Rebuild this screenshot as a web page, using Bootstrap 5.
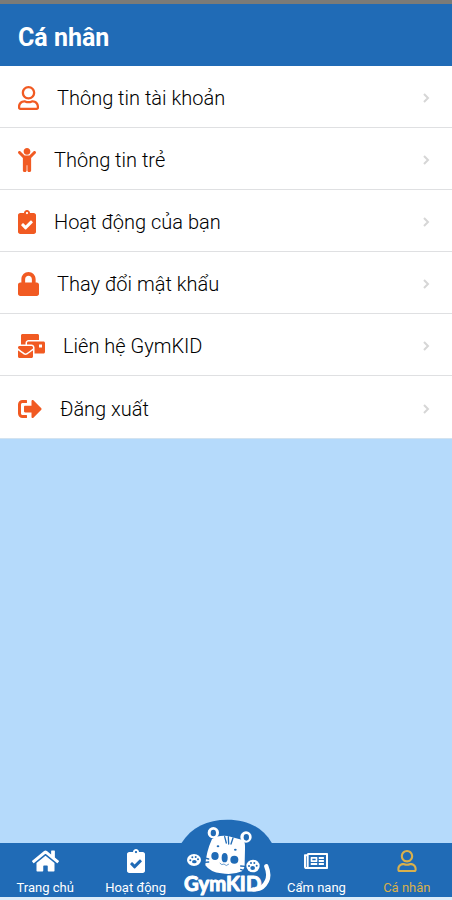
<!DOCTYPE html>
<html lang="vi">
<head>
<meta charset="utf-8">
<meta name="viewport" content="width=device-width, initial-scale=1">
<title>Cá nhân</title>
<link href="https://cdn.jsdelivr.net/npm/bootstrap@5.3.0/dist/css/bootstrap.min.css" rel="stylesheet">
<style>
body { font-family: Roboto, "Liberation Sans", sans-serif; background: #b5dafb; }
.app-header { background: #206bb6; border-top: 4px solid #7b7b78; height: 66px; padding: 5px 18px 0; }
.app-header h1 { font-size: 25px; line-height: 32px; font-weight: 700; }
.list-group-flush > .menu-row { height: 62px; padding: 3px 22px 0 18px; gap: 18px; font-size: 20px; font-weight: 300; line-height: 28px; color: #000; border: 0; border-bottom: 1px solid #dfe0e2; }
.list-group { padding-bottom: 1px; background: #d3e3f0; }
.menu-row .glyph { height: 24px; fill: #f15a22; }
.menu-row .chevron { width: 8px; height: 10px; fill: none; stroke: #d6d6d6; stroke-width: 2; }
.tab-bar { background: #206bb6; height: 57px; border-bottom: 3px solid #dcecf9; }
.tab-link { color: #fff; font-size: 13px; line-height: 16px; gap: 7px; padding-top: 6px; text-decoration: none; flex: 1 1 0; white-space: nowrap; }
.tab-link svg { fill: currentColor; height: 24px; }
.tab-link .glyph-sm { height: 22px; margin: 1px 0; }
.tab-link.active { color: #d9b04c; }
.brand-tab { flex: 1 1 0; }
.brand-art { width: 115px; height: 90px; bottom: -3px; left: 50%; margin-left: -56px; }
.brand-name { font-family: Lato, sans-serif; font-weight: 700; font-size: 61px; fill: #fff; stroke: #fff; stroke-width: 3; stroke-linejoin: round; }
</style>
<script src="https://cdn.jsdelivr.net/npm/bootstrap@5.3.0/dist/js/bootstrap.bundle.min.js"></script>
</head>
<body>
<svg class="d-none" aria-hidden="true">
  <symbol id="user" viewBox="0 0 448 512"><path d="M313.6 304c-28.7 0-42.5 16-89.6 16-47.1 0-60.8-16-89.6-16C60.2 304 0 364.2 0 438.4V464c0 26.5 21.5 48 48 48h352c26.5 0 48-21.5 48-48v-25.6c0-74.2-60.2-134.4-134.4-134.4zM400 464H48v-25.6c0-47.6 38.8-86.4 86.4-86.4 14.6 0 38.3 16 89.6 16 51.7 0 74.9-16 89.6-16 47.6 0 86.4 38.8 86.4 86.4V464zM224 288c79.5 0 144-64.5 144-144S303.5 0 224 0 80 64.5 80 144s64.5 144 144 144zm0-240c52.9 0 96 43.1 96 96s-43.1 96-96 96-96-43.1-96-96 43.1-96 96-96z"/></symbol>
  <symbol id="clip" viewBox="0 0 384 512"><path d="M336 64h-80c0-35.3-28.7-64-64-64s-64 28.7-64 64H48C21.5 64 0 85.5 0 112v352c0 26.5 21.5 48 48 48h288c26.5 0 48-21.5 48-48V112c0-26.5-21.5-48-48-48zM192 40c13.3 0 24 10.7 24 24s-10.7 24-24 24-24-10.7-24-24 10.7-24 24-24zm121.2 231.8l-143 141.8c-4.7 4.7-12.3 4.6-17-.1l-82.6-83.3c-4.7-4.7-4.6-12.3.1-17L99.1 285c4.7-4.7 12.3-4.6 17 .1l46 46.4 106-105.2c4.7-4.7 12.3-4.6 17 .1l28.2 28.4c4.7 4.8 4.6 12.3-.1 17z"/></symbol>
  <symbol id="chev" viewBox="0 0 8 10"><path d="M2 1l4 4-4 4"/></symbol>
</svg>
<div class="d-flex flex-column min-vh-100">
  <header class="app-header d-flex align-items-center text-white">
    <h1 class="m-0">Cá nhân</h1>
  </header>
  <main class="list-group list-group-flush rounded-0">
    <a href="#account" class="menu-row list-group-item list-group-item-action d-flex align-items-center">
      <svg class="glyph" width="21"><use href="#user"/></svg><span class="flex-grow-1">Thông tin tài khoản</span><svg class="chevron"><use href="#chev"/></svg></a>
    <a href="#child" class="menu-row list-group-item list-group-item-action d-flex align-items-center">
      <svg class="glyph" width="18" viewBox="0 0 384 512"><path d="M120 72c0-39.765 32.235-72 72-72s72 32.235 72 72c0 39.764-32.235 72-72 72s-72-32.236-72-72zm254.627 1.373c-12.496-12.497-32.758-12.497-45.254 0L242.745 160H141.254L54.627 73.373c-12.496-12.497-32.758-12.497-45.254 0-12.497 12.497-12.497 32.758 0 45.255L104 213.254V480c0 17.673 14.327 32 32 32h16c17.673 0 32-14.327 32-32V368h16v112c0 17.673 14.327 32 32 32h16c17.673 0 32-14.327 32-32V213.254l94.627-94.627c12.497-12.496 12.497-32.757 0-45.254z"/></svg><span class="flex-grow-1">Thông tin trẻ</span><svg class="chevron"><use href="#chev"/></svg></a>
    <a href="#activity" class="menu-row list-group-item list-group-item-action d-flex align-items-center">
      <svg class="glyph" width="18"><use href="#clip"/></svg><span class="flex-grow-1">Hoạt động của bạn</span><svg class="chevron"><use href="#chev"/></svg></a>
    <a href="#password" class="menu-row list-group-item list-group-item-action d-flex align-items-center">
      <svg class="glyph" width="21" viewBox="0 0 448 512"><path d="M400 224h-24v-72C376 68.2 307.8 0 224 0S72 68.2 72 152v72H48c-26.5 0-48 21.5-48 48v192c0 26.5 21.5 48 48 48h352c26.5 0 48-21.5 48-48V272c0-26.5-21.5-48-48-48zm-104 0H152v-72c0-39.7 32.3-72 72-72s72 32.3 72 72v72z"/></svg><span class="flex-grow-1">Thay đổi mật khẩu</span><svg class="chevron"><use href="#chev"/></svg></a>
    <a href="#contact" class="menu-row list-group-item list-group-item-action d-flex align-items-center">
      <svg class="glyph" width="27" viewBox="0 0 576 512"><path d="M160 448c-25.6 0-51.2-22.4-64-32-64-44.8-83.2-60.8-96-70.4V480c0 17.67 14.33 32 32 32h256c17.67 0 32-14.33 32-32V345.6c-12.8 9.6-32 25.6-96 70.4-12.8 9.6-38.4 32-64 32zm128-192H32c-17.67 0-32 14.33-32 32v16c25.6 19.2 22.4 19.2 115.2 86.4 9.6 6.4 28.8 25.6 44.8 25.6s35.2-19.2 44.8-22.4c92.8-67.2 89.6-67.2 115.2-86.4V288c0-17.67-14.33-32-32-32zm256-96H224c-17.67 0-32 14.33-32 32v32h96c33.21 0 60.59 25.42 63.71 57.82l.29-.22V416h192c17.67 0 32-14.33 32-32V192c0-17.67-14.33-32-32-32zm-32 128h-64v-64h64v64zm-352-96c0-35.29 28.71-64 64-64h224V32c0-17.67-14.33-32-32-32H96C78.33 0 64 14.33 64 32v192h96v-32z"/></svg><span class="flex-grow-1">Liên hệ GymKID</span><svg class="chevron"><use href="#chev"/></svg></a>
    <a href="#logout" class="menu-row list-group-item list-group-item-action d-flex align-items-center">
      <svg class="glyph" width="24" viewBox="0 0 512 512"><path d="M497 273L329 441c-15 15-41 4.500-41-17v-96H152c-13.300 0-24-10.700-24-24v-96c0-13.300 10.700-24 24-24h136V88c0-21.400 25.900-32 41-17l168 168c9.300 9.400 9.300 24.600 0 34zM192 436v-40c0-6.600-5.400-12-12-12H96c-17.700 0-32-14.300-32-32V160c0-17.700 14.300-32 32-32h84c6.600 0 12-5.400 12-12V76c0-6.600-5.400-12-12-12H96c-53 0-96 43-96 96v192c0 53 43 96 96 96h84c6.600 0 12-5.400 12-12z"/></svg><span class="flex-grow-1">Đăng xuất</span><svg class="chevron"><use href="#chev"/></svg></a>
  </main>
  <nav class="tab-bar sticky-bottom mt-auto d-flex">
    <a href="#home" class="tab-link d-flex flex-column align-items-center">
      <svg width="27" viewBox="0 0 576 512"><path d="M280.370 148.260L96 300.110V464a16 16 0 0 0 16 16l112.060-.290a16 16 0 0 0 15.920-16V368a16 16 0 0 1 16-16h64a16 16 0 0 1 16 16v95.640a16 16 0 0 0 16 16.050L464 480a16 16 0 0 0 16-16V300L295.670 148.260a12.190 12.190 0 0 0-15.300 0zM571.600 251.470L488 182.560V44.050a12 12 0 0 0-12-12h-56a12 12 0 0 0-12 12v72.610L318.470 43a48 48 0 0 0-61 0L4.340 251.470a12 12 0 0 0-1.600 16.900l25.500 31A12 12 0 0 0 45.150 301l235.220-193.740a12.190 12.190 0 0 1 15.300 0L530.900 301a12 12 0 0 0 16.900-1.600l25.500-31a12 12 0 0 0-1.700-16.930z"/></svg>Trang chủ</a>
    <a href="#activities" class="tab-link d-flex flex-column align-items-center"><svg width="18"><use href="#clip"/></svg>Hoạt động</a>
    <a href="#gymkid" class="brand-tab position-relative" aria-label="GymKID">
      <svg class="brand-art position-absolute" viewBox="0 0 345 270">
        <path d="M34 100C64 51 112 29 172 29S277 51 306 100V258H34z" fill="#206bb6"/>
        <g fill="#fff">
          <path d="M126 87Q147 74 173 78L221 91Q226 99 225 118L224 160Q225 174 216 184Q188 196 154 190Q121 187 106 166Q108 127 126 87z"/>
          <circle cx="130" cy="68" r="17"/><circle cx="228" cy="81" r="17"/>
          <ellipse cx="72" cy="150" rx="21" ry="18"/><ellipse cx="249" cy="168" rx="20" ry="19"/>
        </g>
        <path d="M289 169Q305 207 277 231Q270 237 250 238" fill="none" stroke="#fff" stroke-width="13" stroke-linecap="round"/>
        <g fill="#206bb6">
          <ellipse cx="130" cy="69" rx="8" ry="10"/><ellipse cx="229" cy="82" rx="8" ry="10"/>
          <ellipse cx="135" cy="138" rx="11" ry="12"/><ellipse cx="193" cy="149" rx="12" ry="12"/>
          <ellipse cx="164" cy="143" rx="9" ry="14"/>
          <ellipse cx="144" cy="109" rx="4" ry="3"/><ellipse cx="196" cy="119" rx="4" ry="3"/>
          <ellipse cx="73" cy="155" rx="7" ry="5"/><circle cx="61" cy="151" r="3"/><circle cx="67" cy="142" r="3"/><circle cx="77" cy="141" r="3"/><circle cx="84" cy="148" r="3"/>
          <ellipse cx="248" cy="174" rx="7" ry="6"/><circle cx="237" cy="168" r="3"/><circle cx="243" cy="159" r="3"/><circle cx="253" cy="159" r="3"/><circle cx="260" cy="167" r="3"/>
        </g>
        <g fill="none" stroke="#206bb6" stroke-width="4" stroke-linecap="round">
          <path d="M164 80l5 19M175 80l1 22M189 84l-6 18M104 144l12 3M103 157l13-1M212 168l13 1M212 178l11 4"/>
          <path d="M150 160q5 7 12 2q6 9 14 1" stroke-width="2"/>
        </g>
        <text class="brand-name" x="42" y="242">GymKID</text>
      </svg></a>
    <a href="#guide" class="tab-link d-flex flex-column align-items-center"><svg class="glyph-sm" width="24" viewBox="0 0 576 512"><path d="M552 64H112c-20.858 0-38.643 13.377-45.248 32H24c-13.255 0-24 10.745-24 24v272c0 30.928 25.072 56 56 56h496c13.255 0 24-10.745 24-24V88c0-13.255-10.745-24-24-24zM48 392V144h16v248c0 4.411-3.589 8-8 8s-8-3.589-8-8zm480 8H111.422c.374-2.614.578-5.283.578-8V112h416v288zM172 280h136c6.627 0 12-5.373 12-12v-96c0-6.627-5.373-12-12-12H172c-6.627 0-12 5.373-12 12v96c0 6.627 5.373 12 12 12zm28-80h80v40h-80v-40zm-40 140v-24c0-6.627 5.373-12 12-12h136c6.627 0 12 5.373 12 12v24c0 6.627-5.373 12-12 12H172c-6.627 0-12-5.373-12-12zm192 0v-24c0-6.627 5.373-12 12-12h104c6.627 0 12 5.373 12 12v24c0 6.627-5.373 12-12 12H364c-6.627 0-12-5.373-12-12zm0-144v-24c0-6.627 5.373-12 12-12h104c6.627 0 12 5.373 12 12v24c0 6.627-5.373 12-12 12H364c-6.627 0-12-5.373-12-12zm0 72v-24c0-6.627 5.373-12 12-12h104c6.627 0 12 5.373 12 12v24c0 6.627-5.373 12-12 12H364c-6.627 0-12-5.373-12-12z"/></svg>Cẩm nang</a>
    <a href="#profile" class="tab-link active d-flex flex-column align-items-center" aria-current="page"><svg class="glyph-sm" width="20"><use href="#user"/></svg>Cá nhân</a>
  </nav>
</div>
</body>
</html>
